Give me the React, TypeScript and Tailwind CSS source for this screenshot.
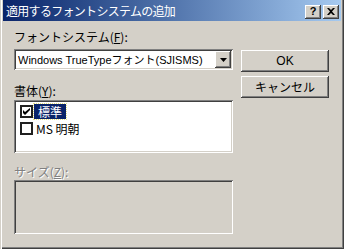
const raised =
  "shadow-[inset_-1px_-1px_0_#404040,inset_1px_1px_0_#ffffff,inset_-2px_-2px_0_#808080,inset_2px_2px_0_#d4d0c8]";
const sunken =
  "shadow-[inset_1px_1px_0_#808080,inset_-1px_-1px_0_#ffffff,inset_2px_2px_0_#404040,inset_-2px_-2px_0_#d4d0c8]";

const Check = ({ checked }: { checked: boolean }) => (
  <span className="w-[13px] h-[13px] bg-white shrink-0 flex items-center justify-center border-2 border-[#202020]">
    {checked && (
      <svg width="7" height="7" viewBox="0 0 7 7">
        <path d="M0 2 L0 5 L2 7 L7 2 L7 0 L2 4 Z" fill="#000" />
      </svg>
    )}
  </span>
);

const App = () => {
  return (
    <div className="w-[344px] h-[249px] bg-[#d4d0c8] px-[3px] font-['Noto_Sans_CJK_JP',sans-serif] text-[12px] text-black shadow-[inset_1px_0_0_#d4d0c8,inset_2px_0_0_#ffffff,inset_-1px_-1px_0_#404040,inset_-2px_-2px_0_#808080]">
      <div className="h-[21px] flex items-center justify-between pl-[3px] pr-[2px] bg-gradient-to-r from-[#0a246a] to-[#a6caf0]">
        <span className="text-white text-[12px] leading-[14px] tracking-[-0.7px] whitespace-nowrap">適用するフォントシステムの追加</span>
        <div className="flex gap-[2px] mt-[2px]">
          <span className={`w-[16px] h-[14px] bg-[#d4d0c8] flex items-center justify-center ${raised}`}>
            <span className="font-['Liberation_Sans',sans-serif] font-bold text-[11px] leading-[11px]">?</span>
          </span>
          <span className={`w-[16px] h-[14px] bg-[#d4d0c8] flex items-center justify-center ${raised}`}>
            <svg width="8" height="7" viewBox="0 0 8 7">
              <path d="M0 0 L2 0 L4 2 L6 0 L8 0 L5 3.5 L8 7 L6 7 L4 5 L2 7 L0 7 L3 3.5 Z" fill="#000" />
            </svg>
          </span>
        </div>
      </div>

      <div className="flex gap-[8px] pl-[11px]">
        <div className="w-[219px] flex flex-col">
          <div className="mt-[9px] h-[14px] leading-[14px] whitespace-nowrap">フォントシステム(<span className="underline">F</span>):</div>
          <div className={`mt-[5px] h-[21px] bg-white flex items-center justify-between pl-[4px] pr-[2px] ${sunken}`}>
            <span className="leading-[14px] text-[11px] whitespace-nowrap font-['Liberation_Sans','Noto_Sans_CJK_JP',sans-serif]">Windows TrueTypeフォント(SJISMS)</span>
            <span className={`w-[16px] h-[17px] bg-[#d4d0c8] flex items-center justify-center ${raised}`}>
              <svg width="7" height="4" viewBox="0 0 7 4">
                <path d="M0 0 L7 0 L3.5 4 Z" fill="#000" />
              </svg>
            </span>
          </div>

          <div className="mt-[14px] h-[14px] leading-[14px] whitespace-nowrap">書体(<span className="underline">Y</span>):</div>
          <div className={`mt-[2px] h-[53px] bg-white pl-[6px] pt-[3px] flex flex-col gap-[1px] ${sunken}`}>
            <div className="flex items-center h-[16px]">
              <Check checked />
              <span className="ml-[1px] px-[4px] h-[15px] bg-[#0a246a] text-white text-[12px] leading-[15px] outline outline-1 outline-dotted outline-[#e8e080]">標準</span>
            </div>
            <div className="flex items-center h-[16px]">
              <Check checked={false} />
              <span className="ml-[3px] text-[12px] leading-[15px] whitespace-nowrap">MS 明朝</span>
            </div>
          </div>

          <div className="mt-[12px] h-[14px] leading-[14px] whitespace-nowrap text-[#808080] [text-shadow:1px_1px_0_#ffffff]">サイズ(<span className="underline">Z</span>):</div>
          <div className={`mt-[1px] h-[54px] bg-[#d4d0c8] ${sunken}`} />
        </div>

        <div className="w-[88px] flex flex-col mt-[29px] gap-[4px]">
          <div className={`h-[22px] flex items-center justify-center ${raised}`}>
            <span className="font-['Liberation_Sans',sans-serif] leading-[14px]">OK</span>
          </div>
          <div className={`h-[22px] flex items-center justify-center ${raised}`}>
            <span className="leading-[14px] whitespace-nowrap">キャンセル</span>
          </div>
        </div>
      </div>
    </div>
  );
};

export default App;
